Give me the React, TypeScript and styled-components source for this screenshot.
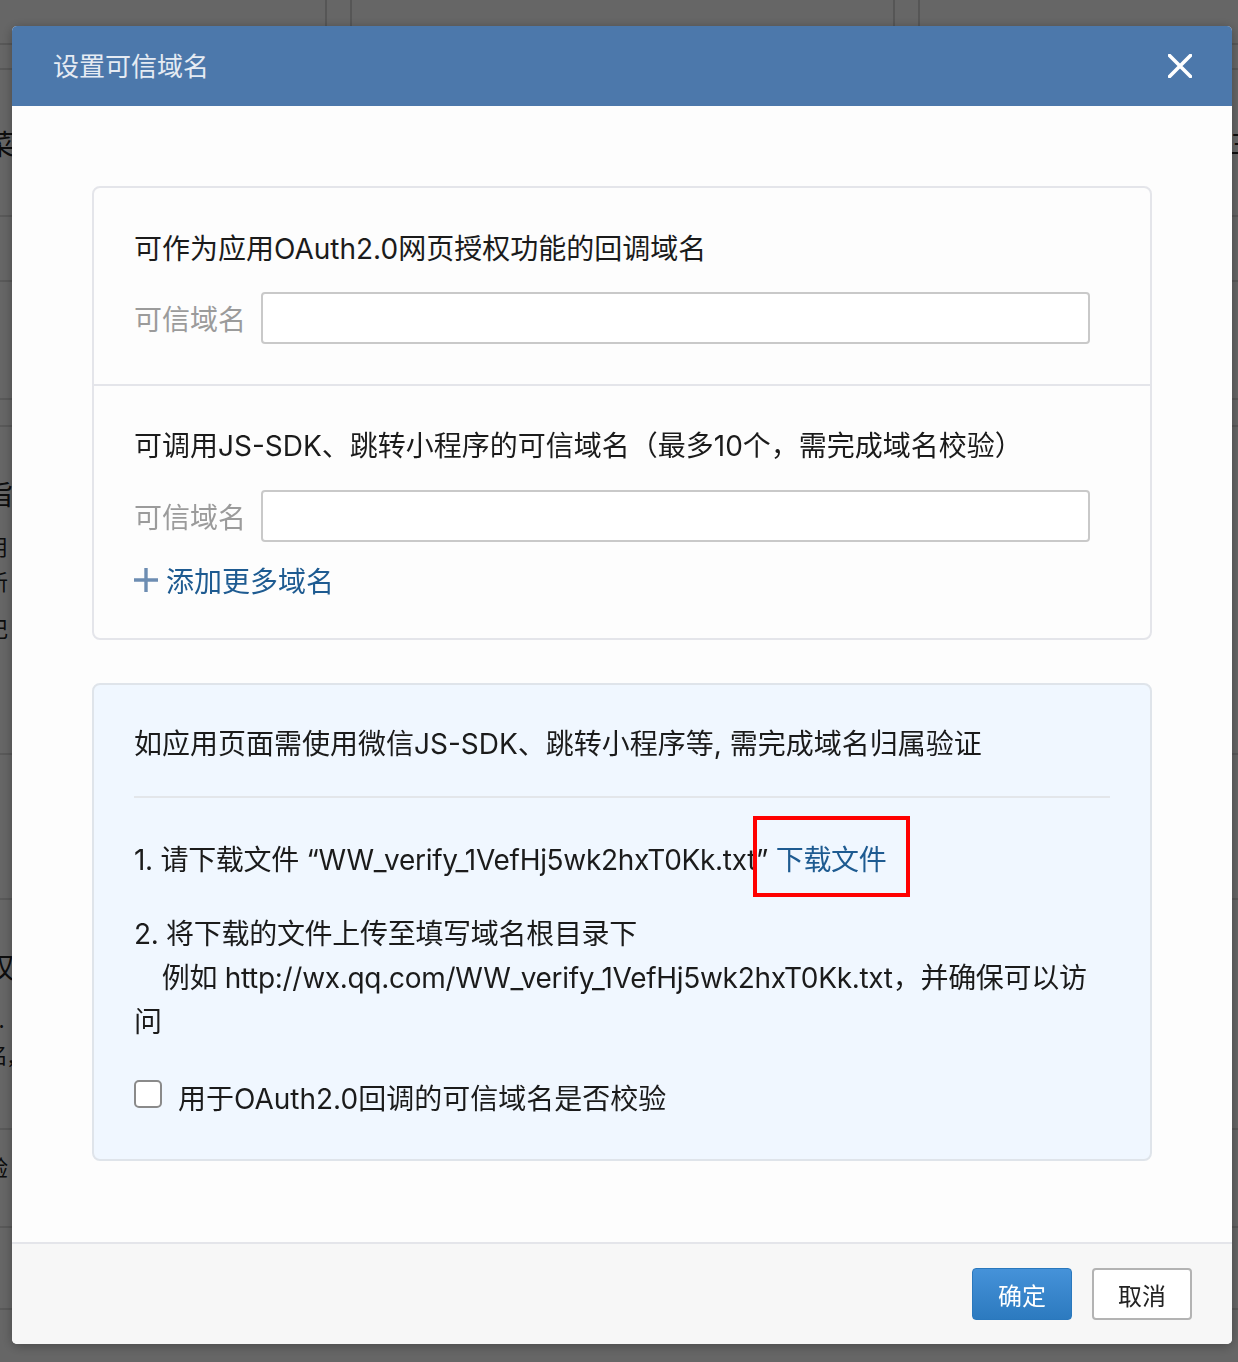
import React from "react";
import styled, { createGlobalStyle } from "styled-components";

const GlobalStyle = createGlobalStyle`
  html, body { margin: 0; padding: 0; }
  body {
    width: 1238px;
    height: 1362px;
    overflow: hidden;
    background: #fff;
    font-family: "Inter", "Noto Sans CJK SC", sans-serif;
  }
  * { box-sizing: border-box; }
`;

/* ---------- backdrop page (dimmed) ---------- */
const Backdrop = styled.div`
  width: 1238px;
  height: 1362px;
  background: #fff;
  display: flex;
  flex-direction: column;
  overflow: hidden;
  color: #111;
  font-family: "Noto Sans CJK SC", sans-serif;
`;
const TopStrip = styled.div`
  height: 43px;
  display: grid;
  grid-template-columns: 325px 25px 543px 25px 1fr;
  & > div + div { border-left: 2px solid #d8d8d8; }
`;
const Band = styled.div`
  height: 27px;
  border-top: 2px solid #dcdcdc;
  border-bottom: 2px solid #dcdcdc;
`;
const BgRow = styled.div<{ $h: number; $pt?: number }>`
  height: ${(p) => p.$h}px;
  flex: none;
  padding-top: ${(p) => p.$pt ?? 0}px;
  border-bottom: 2px solid #dedede;
  display: flex;
  justify-content: space-between;
  align-items: ${(p) => (p.$pt ? "flex-start" : "center")};
`;
const BgCol = styled.div`
  display: flex;
  flex-direction: column;
  margin-left: -14px;
`;
const BgText = styled.span<{ $size: number; $mt?: number }>`
  font-size: ${(p) => p.$size}px;
  line-height: ${(p) => (p.$size > 24 ? 36 : 28)}px;
  margin-top: ${(p) => p.$mt ?? 0}px;
  color: #222;
`;
const BgRight = styled.span`
  font-size: 26px;
  margin-right: -18px;
  color: #222;
`;
const Dim = styled.div`
  position: fixed;
  inset: 0;
  background: rgba(0, 0, 0, 0.6);
`;

/* ---------- modal ---------- */
const Modal = styled.div`
  position: fixed;
  top: 26px;
  left: 12px;
  width: 1220px;
  border-radius: 5px;
  overflow: hidden;
  background: #fdfdfd;
  box-shadow: 0 2px 12px rgba(0, 0, 0, 0.3);
  display: flex;
  flex-direction: column;
`;
const Header = styled.div`
  height: 80px;
  background: #4c78ab;
  display: flex;
  align-items: center;
  justify-content: space-between;
  padding: 0 40px 4px 41px;
`;
const Title = styled.h2`
  margin: 0;
  font-size: 26px;
  font-weight: 400;
  color: #e5ebf3;
  font-family: "Noto Sans CJK SC", sans-serif;
`;
const CloseBtn = styled.button`
  width: 24px;
  height: 24px;
  padding: 0;
  border: 0;
  background: none;
  cursor: pointer;
  display: flex;
  margin-top: 4px;
`;
const Body = styled.div`
  padding: 80px 80px 81px;
  display: flex;
  flex-direction: column;
  gap: 43px;
`;
const Card = styled.div`
  border: 2px solid #e4e5ea;
  border-radius: 8px;
  background: #fdfdfd;
  display: flex;
  flex-direction: column;
`;
const Section = styled.div<{ $pt: number; $pb: number }>`
  padding: ${(p) => p.$pt}px 60px ${(p) => p.$pb}px 40px;
  display: flex;
  flex-direction: column;
  & + & { border-top: 2px solid #e4e5ea; }
`;
const Text = styled.div`
  font-size: 28px;
  line-height: 42px;
  color: #1b1b1b;
`;
const FieldRow = styled.div<{ $mt: number }>`
  margin-top: ${(p) => p.$mt}px;
  display: flex;
  align-items: center;
`;
const FieldLabel = styled.label`
  width: 127px;
  flex: none;
  font-size: 28px;
  color: #9b9b9b;
  font-family: "Noto Sans CJK SC", sans-serif;
`;
const Input = styled.input`
  flex: 1;
  height: 52px;
  border: 2px solid #c9c9c9;
  border-radius: 4px;
  background: #fff;
  font-size: 26px;
  padding: 0 12px;
  outline: none;
`;
const AddLink = styled.a`
  margin-top: 17px;
  display: flex;
  align-items: center;
  gap: 8px;
  font-size: 28px;
  line-height: 42px;
  color: #1e5b91;
  text-decoration: none;
  cursor: pointer;
  font-family: "Noto Sans CJK SC", sans-serif;
`;
const InfoCard = styled.div`
  border: 2px solid #dfe4ea;
  border-radius: 8px;
  background: #f0f7ff;
  padding: 37px 40px 40px;
  display: flex;
  flex-direction: column;
`;
const Para = styled.p<{ $mt?: number; $tight?: boolean }>`
  margin: ${(p) => p.$mt ?? 0}px 0 0;
  font-size: 28px;
  line-height: 44px;
  letter-spacing: ${(p) => (p.$tight ? "-0.3px" : "normal")};
  color: #1b1b1b;
`;
const Rule = styled.hr`
  margin: 30px 0 40px;
  border: 0;
  height: 2px;
  background: #e3e6ea;
`;
const LinkWrap = styled.span`
  position: relative;
  display: inline-block;
  line-height: 44px;
`;
const FileLink = styled.a`
  color: #1e5b91;
  text-decoration: none;
  cursor: pointer;
`;
const Highlight = styled.span`
  position: absolute;
  left: -23px;
  right: -23px;
  top: -22px;
  bottom: -15px;
  border: 4px solid #ff0000;
  pointer-events: none;
`;
const CheckRow = styled.label`
  margin-top: 31px;
  height: 44px;
  display: flex;
  align-items: center;
  gap: 16px;
  font-size: 28px;
  color: #1b1b1b;
  cursor: pointer;
`;
const Box = styled.span`
  width: 28px;
  height: 28px;
  flex: none;
  border: 2px solid #8a8a8a;
  border-radius: 5px;
  background: #fff;
  margin-top: -6px;
`;
const Footer = styled.div`
  border-top: 2px solid #e4e5ea;
  background: #f7f7f7;
  padding: 24px 40px 24px;
  display: flex;
  justify-content: flex-end;
  gap: 20px;
`;
const Button = styled.button<{ $primary?: boolean }>`
  width: 100px;
  height: 52px;
  border-radius: 4px;
  font-size: 24px;
  font-family: "Noto Sans CJK SC", sans-serif;
  cursor: pointer;
  color: ${(p) => (p.$primary ? "#fff" : "#222")};
  background: ${(p) =>
    p.$primary ? "linear-gradient(#4592d9, #2c7abf)" : "#fff"};
  border: ${(p) => (p.$primary ? "1px solid #2a78bd" : "2px solid #b3b3b3")};
`;

const CloseIcon = () => (
  <svg width="24" height="24" viewBox="0 0 24 24">
    <path d="M1.5 1.5 L22.5 22.5 M22.5 1.5 L1.5 22.5" stroke="#fff" strokeWidth="3.6" strokeLinecap="square" />
  </svg>
);

const PlusIcon = () => (
  <svg width="24" height="24" viewBox="0 0 24 24">
    <path d="M12 0 V24 M0 12 H24" stroke="#6d8db2" strokeWidth="3.4" />
  </svg>
);

export default function App() {
  return (
    <>
      <GlobalStyle />
      <Backdrop>
        <TopStrip>
          <div />
          <div />
          <div />
          <div />
          <div />
        </TopStrip>
        <Band />
        <BgRow $h={147}>
          <BgCol>
            <BgText $size={28}>菜</BgText>
          </BgCol>
          <BgRight>三</BgRight>
        </BgRow>
        <BgRow $h={65} />
        <BgRow $h={118} />
        <BgRow $h={27} />
        <BgRow $h={328} $pt={48}>
          <BgCol>
            <BgText $size={28}>旨</BgText>
            <BgText $size={22} $mt={20}>用</BgText>
            <BgText $size={22} $mt={7}>新</BgText>
            <BgText $size={22} $mt={19}>记</BgText>
          </BgCol>
        </BgRow>
        <BgRow $h={145} />
        <BgRow $h={230} $pt={48}>
          <BgCol>
            <BgText $size={28}>权</BgText>
            <BgText $size={22} $mt={20}>a.</BgText>
            <BgText $size={22} $mt={7}>名,</BgText>
          </BgCol>
        </BgRow>
        <BgRow $h={98} $pt={22}>
          <BgCol>
            <BgText $size={22}>验</BgText>
          </BgCol>
        </BgRow>
        <BgRow $h={82} />
      </Backdrop>
      <Dim />
      <Modal>
        <Header>
          <Title>设置可信域名</Title>
          <CloseBtn aria-label="关闭">
            <CloseIcon />
          </CloseBtn>
        </Header>
        <Body>
          <Card>
            <Section $pt={40} $pb={40}>
              <Text>可作为应用OAuth2.0网页授权功能的回调域名</Text>
              <FieldRow $mt={22}>
                <FieldLabel>可信域名</FieldLabel>
                <Input />
              </FieldRow>
            </Section>
            <Section $pt={39} $pb={37}>
              <Text>可调用JS-SDK、跳转小程序的可信域名（最多10个，需完成域名校验）</Text>
              <FieldRow $mt={23}>
                <FieldLabel>可信域名</FieldLabel>
                <Input />
              </FieldRow>
              <AddLink>
                <PlusIcon />
                添加更多域名
              </AddLink>
            </Section>
          </Card>
          <InfoCard>
            <Para>如应用页面需使用微信JS-SDK、跳转小程序等, 需完成域名归属验证</Para>
            <Rule />
            <Para $tight>
              {"1. 请下载文件 “WW_verify_1VefHj5wk2hxT0Kk.txt” "}
              <LinkWrap>
                <FileLink>下载文件</FileLink>
                <Highlight />
              </LinkWrap>
            </Para>
            <Para $mt={30} $tight>
              {"2. 将下载的文件上传至填写域名根目录下"}
              <br />
              {"\u3000例如 http://wx.qq.com/WW_verify_1VefHj5wk2hxT0Kk.txt，并确保可以访问"}
            </Para>
            <CheckRow>
              <Box />
              用于OAuth2.0回调的可信域名是否校验
            </CheckRow>
          </InfoCard>
        </Body>
        <Footer>
          <Button $primary>确定</Button>
          <Button>取消</Button>
        </Footer>
      </Modal>
    </>
  );
}
